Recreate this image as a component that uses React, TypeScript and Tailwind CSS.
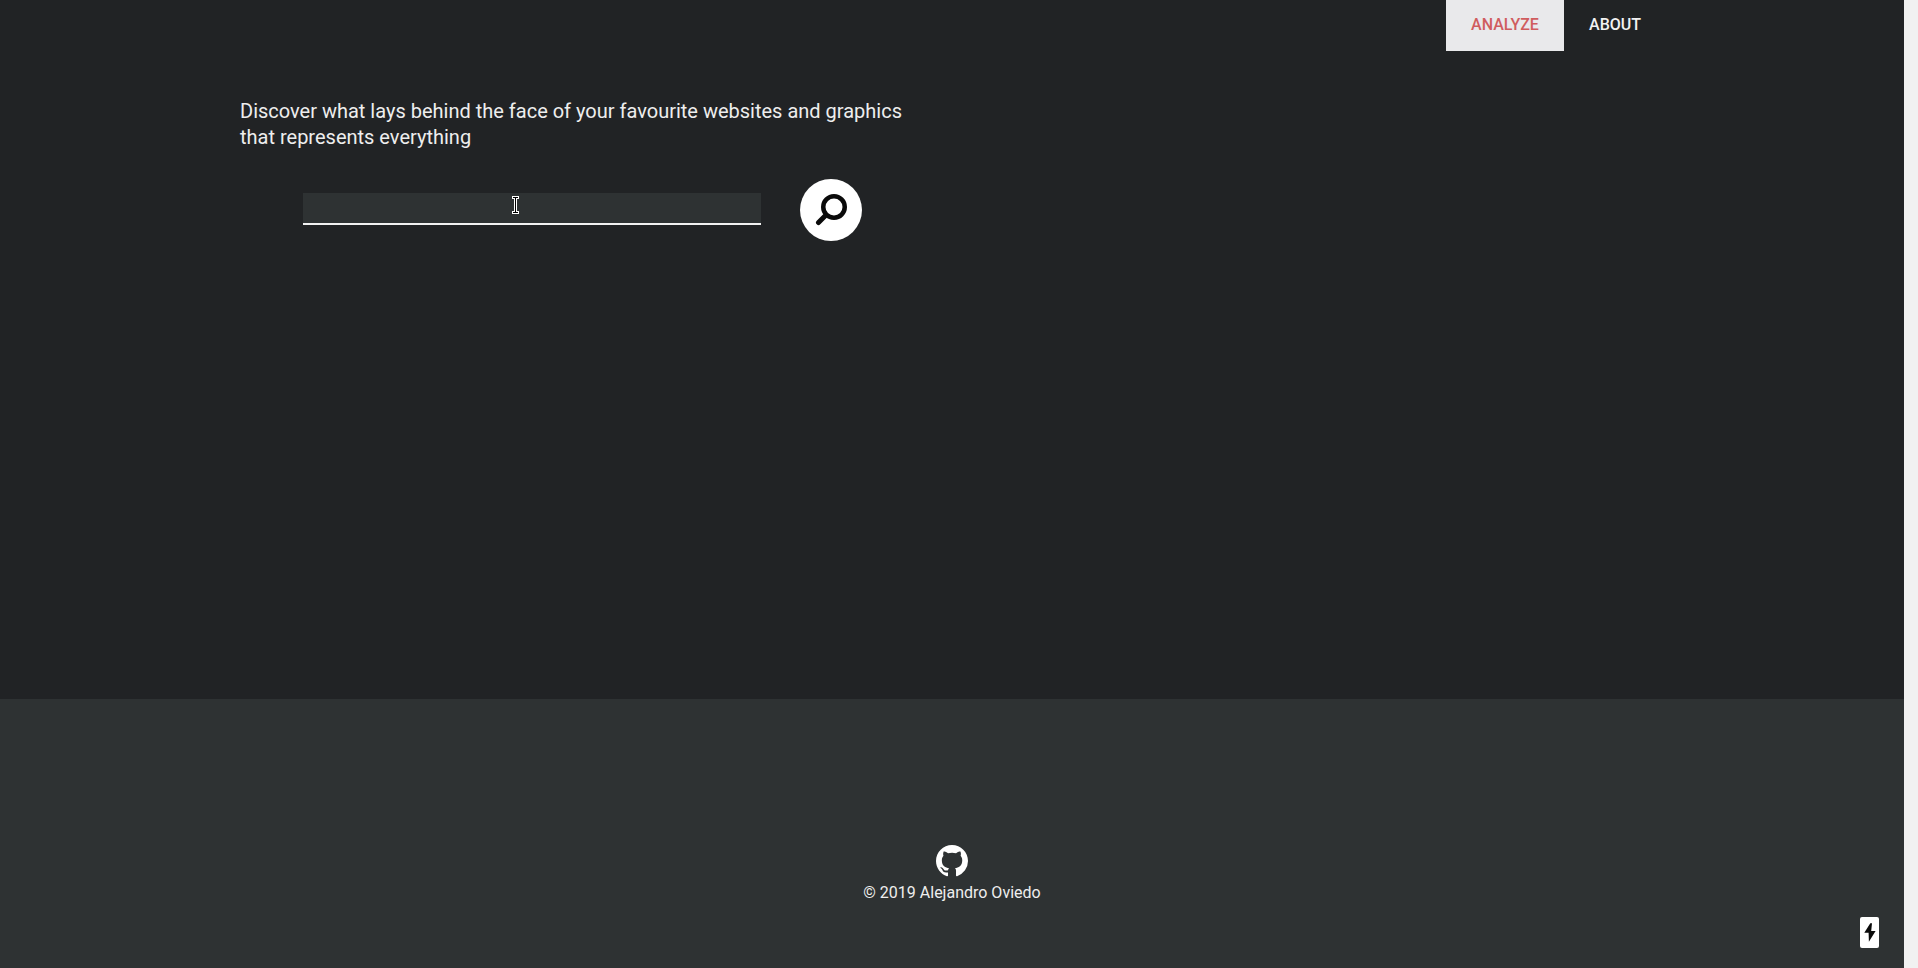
export default function App() {
  return (
    <div className="flex h-[968px] w-full overflow-hidden font-['Roboto',sans-serif]">
      <div className="relative flex min-w-0 flex-1 flex-col">
        <main className="h-[699px] bg-[#212325]">
          <nav className="flex h-[51px] justify-end pr-[238px] text-[16px] font-medium">
            <a className="flex h-[51px] w-[118px] items-center justify-center bg-[#e9e9eb] pb-[2px] text-[#d05c5e]">ANALYZE</a>
            <a className="flex h-[51px] w-[102px] items-center justify-center pb-[2px] text-[#f2f2f2]">ABOUT</a>
          </nav>
          <section className="w-[680px] pl-[240px] pt-[47px]">
            <p className="w-[680px] text-[20px] leading-[26px] text-[#eeeeee]">
              Discover what lays behind the face of your favourite websites and graphics that represents everything
            </p>
            <div className="flex w-[680px] items-start pl-[63px] pt-[29px]">
              <div className="relative mt-[14px] h-[32px] w-[458px] border-b-2 border-[#f2f2f2] bg-[#2e3233]">
                <svg className="absolute left-[209px] top-[3px]" width="7" height="18" viewBox="0 0 7 18" shapeRendering="crispEdges">
                  <path d="M0 0H7V3H5V15H7V18H0V15H2V3H0Z" fill="#ffffff" />
                  <path d="M1 1H6V2H4V16H6V17H1V16H3V2H1Z" fill="#000000" />
                </svg>
              </div>
              <button className="ml-[39px] flex h-[62px] w-[62px] items-center justify-center rounded-full bg-white">
                <svg width="32" height="32" viewBox="0 0 32 32" fill="none" stroke="#0a0a0a">
                  <circle cx="19" cy="13" r="10.75" strokeWidth="4.5" />
                  <path d="M12 20L9 23" strokeWidth="3" />
                  <path d="M9.5 22.5L3.5 28.5" strokeWidth="5" strokeLinecap="round" />
                </svg>
              </button>
            </div>
          </section>
        </main>
        <footer className="flex h-[269px] flex-col items-center bg-[#2e3233] pt-[146px] text-[#eeeeee]">
          <svg width="32" height="32" viewBox="0 0 16 16" fill="#ffffff">
            <path d="M8 0C3.58 0 0 3.58 0 8c0 3.54 2.29 6.53 5.47 7.59.4.07.55-.17.55-.38 0-.19-.01-.82-.01-1.49-2.01.37-2.53-.49-2.69-.94-.09-.23-.48-.94-.82-1.13-.28-.15-.68-.52-.01-.53.63-.01 1.08.58 1.23.82.72 1.21 1.87.87 2.33.66.07-.52.28-.87.51-1.07-1.78-.2-3.64-.89-3.64-3.95 0-.87.31-1.59.82-2.15-.08-.2-.36-1.02.08-2.12 0 0 .67-.21 2.2.82.64-.18 1.32-.27 2-.27s1.36.09 2 .27c1.53-1.04 2.2-.82 2.2-.82.44 1.1.16 1.92.08 2.12.51.56.82 1.27.82 2.15 0 3.07-1.87 3.75-3.65 3.95.29.25.54.73.54 1.48 0 1.07-.01 1.93-.01 2.2 0 .21.15.46.55.38A8.01 8.01 0 0 0 16 8c0-4.42-3.58-8-8-8z" />
          </svg>
          <p className="mt-[6px] text-[16px] leading-[19px]">© 2019 Alejandro Oviedo</p>
        </footer>
        <div className="absolute bottom-[20px] right-[25px] flex h-[31px] w-[19px] items-center justify-center rounded-[2px] bg-white">
          <svg width="12" height="19" viewBox="0 0 12 19" fill="#0a0a0a">
            <path d="M6.3 0.3H8L7.2 8H11.6L4.9 18.7L4.6 9.7H0.3Z" />
          </svg>
        </div>
      </div>
      <div className="w-[14px] shrink-0 bg-[#f1f1f1]" />
    </div>
  );
}
